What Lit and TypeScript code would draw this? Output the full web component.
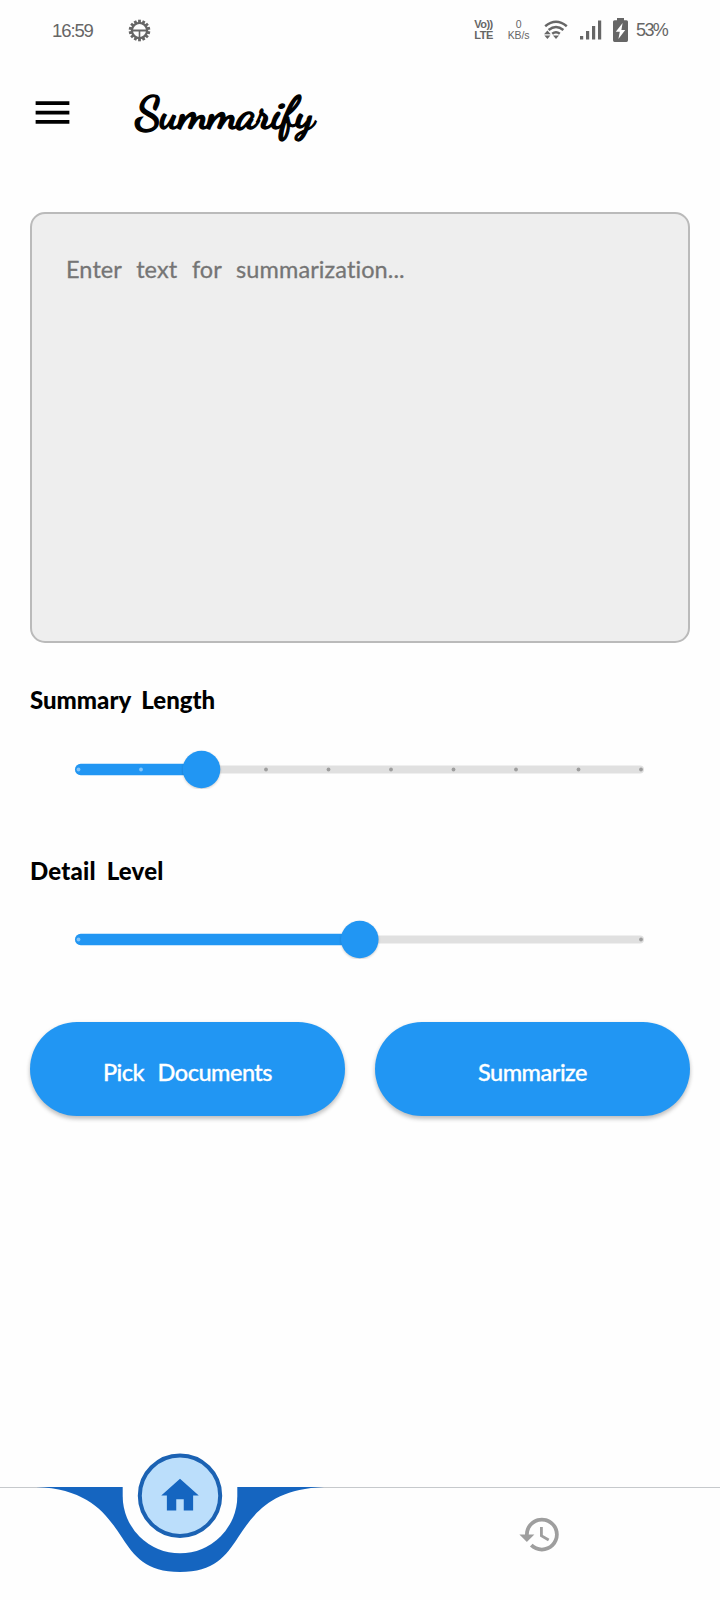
import { LitElement, html, css, svg } from "lit";
import { customElement, property } from "lit/decorators.js";

@customElement("step-slider")
class StepSlider extends LitElement {
  @property({ type: Number }) steps = 1;
  @property({ type: Number }) value = 0;
  static styles = css`
    :host { display: block; height: 40px; }
    svg { display: block; }
    .rest { fill: #e0e0e0; }
    .active, .thumb { fill: #2196f3; }
    .thumb { filter: drop-shadow(0 1px 1px rgba(0, 0, 0, 0.2)); }
    .tick { fill: #9e9e9e; }
    .tick.on { fill: #82c4f8; }
  `;
  render() {
    const x = 48.5 + this.value * 562.5;
    const thumb = this.value < 0.5 ? x - 2 : x;
    const ticks = Array.from({ length: this.steps + 1 }, (_, i) => i / this.steps);
    return html`<svg width="660" height="40" viewBox="0 0 660 40">
      <rect class="rest" x="45" y="16.5" width="569" height="8" rx="4" />
      <rect class="active" x="45" y="14.8" width=${thumb - 45} height="11.4" rx="5.7" />
      ${ticks.map((t) => svg`<circle class=${t < this.value ? "tick on" : "tick"} cx=${48.5 + t * 562.5} cy="20.5" r="1.9" />`)}
      <circle class="thumb" cx=${thumb} cy="20.5" r="18.8" />
    </svg>`;
  }
}

@customElement("app-root")
class AppRoot extends LitElement {
  static styles = css`
    :host {
      display: flex; flex-direction: column; width: 720px; height: 1600px;
      background: #fefefe; box-sizing: border-box; overflow: hidden;
      font-family: Lato, "Open Sans", sans-serif; color: #000;
    }
    * { box-sizing: border-box; }
    svg { display: block; flex: none; }
    .status {
      height: 60px; flex: none; display: flex; align-items: center; padding: 0 53px 0 52px;
      color: #666; fill: #666; font-family: "Liberation Sans", sans-serif;
    }
    .time { font-size: 18.5px; width: 76px; letter-spacing: -1.1px; padding-top: 1px; }
    .right { margin-left: auto; display: flex; align-items: center; }
    .mini { display: flex; flex-direction: column; align-items: center; font-size: 10.5px; line-height: 11px; }
    .volte { font-weight: 700; width: 19px; font-size: 11px; letter-spacing: -0.5px; margin-right: 14px; }
    .speed { width: 23px; margin-right: 14px; letter-spacing: -0.2px; }
    .wifi { margin-right: 12px; }
    .bars { margin-right: 11px; }
    .battery { margin-right: 8px; }
    .pct { font-size: 18px; letter-spacing: -1.6px; width: 31px; white-space: nowrap; padding-top: 1px; }
    header { height: 106px; flex: none; padding-left: 30px; display: flex; align-items: flex-start; }
    .menu { margin-top: 30px; }
    .title {
      margin: 26px 0 0 60px; font: 700 46px/56px "Dancing Script", cursive;
      white-space: nowrap; letter-spacing: -1.2px; -webkit-text-stroke: 1.3px #000;
    }
    main { padding: 46px 30px 0; flex: none; height: 1318px; }
    .box {
      height: 431px; border: 2px solid #bababa; border-radius: 15px; background: #eee;
      padding: 39px 34px; color: #757575; font-size: 23.5px; line-height: 32px;
      letter-spacing: 0.1px; word-spacing: 8.5px; -webkit-text-stroke: 0.3px #757575;
    }
    .label { font-size: 24px; line-height: 32px; font-weight: 900; white-space: nowrap; word-spacing: 5px; }
    .l1 { margin-top: 41px; }
    .l2 { margin-top: 66px; letter-spacing: 0.2px; }
    step-slider { margin-top: 32.5px; }
    .buttons { display: grid; grid-template-columns: 1fr 1fr; gap: 30px; margin-top: 63px; }
    .btn {
      height: 94px; border-radius: 47px; background: #2196f3; color: #fff; border: 0;
      box-shadow: 0 3px 4px rgba(0, 0, 0, 0.22), 0 1px 5px rgba(0, 0, 0, 0.06);
      font: 500 23.5px/32px Lato, sans-serif; word-spacing: 8px; padding: 5px 0 0;
      letter-spacing: -0.5px; -webkit-text-stroke: 0.3px #fff;
    }
    .nav { margin-top: -34px; height: 150px; flex: none; }
    .hair { fill: #c6c9cc; }
    .wave { fill: #1565c0; }
    .gap { fill: #fefefe; }
    .disc { fill: #bbdefb; stroke: #1b62b3; stroke-width: 4; }
    .hist { fill: #9e9e9e; }
  `;
  render() {
    const teeth = Array.from({ length: 14 }, (_, i) => (i * 360) / 14);
    return html`
      <div class="status">
        <span class="time">16:59</span>
        <svg width="23" height="23" viewBox="-11.5 -11.5 23 23">
          ${teeth.map((a) => svg`<rect x="-1.4" y="-10.8" width="2.8" height="4" transform="rotate(${a})" />`)}
          <circle r="7.6" fill="none" stroke="#666" stroke-width="2.2" />
          <path d="M-7-.9H7V.9H-7zM-.8 0H.8V7H-.8z" />
        </svg>
        <div class="right">
          <div class="mini volte"><span>Vo))</span><span>LTE</span></div>
          <div class="mini speed"><span>0</span><span>KB/s</span></div>
          <svg class="wifi" width="24" height="20" viewBox="0 0 24 20">
            <g fill="none" stroke="#666" stroke-width="2.5">
              <path d="M1.2 6.2Q12 -2.8 22.8 6.2M4.6 10Q12 4 19.4 10M8.2 13.8Q12 10.8 15.8 13.8" />
            </g>
            <path d="M9 15.4H15L12 19zM0 14.2L3.4 10.6 6.8 14.2zM.4 15.6H6.4L3.4 19z" />
          </svg>
          <svg class="bars" width="22" height="20" viewBox="0 0 22 20">
            <path d="M0 16H3.2V19.5H0zM6 11H9.2V19.5H6zM12 6H15.2V19.5H12zM18 .5H21.2V19.5H18z" />
          </svg>
          <svg class="battery" width="15" height="24" viewBox="0 0 15 24">
            <path d="M4 0H11V2.2H13.5Q15 2.2 15 3.7V22.3Q15 24 13.5 24H1.5Q0 24 0 22.3V3.7Q0 2.2 1.5 2.2H4z" />
            <path fill="#fff" d="M9.6 5L2.8 13.8H6.8L5.4 21 12.2 12H8.4z" />
          </svg>
          <span class="pct">53%</span>
        </div>
      </div>
      <header>
        <svg class="menu" width="45" height="45" viewBox="0 0 24 24"><path d="M3 18h18v-2H3v2zm0-5h18v-2H3v2zm0-7v2h18V6H3z" /></svg>
        <div class="title">Summarify</div>
      </header>
      <main>
        <div class="box">Enter text for summarization...</div>
        <div class="label l1">Summary Length</div>
        <step-slider .steps=${9} .value=${2 / 9}></step-slider>
        <div class="label l2">Detail Level</div>
        <step-slider .steps=${2} .value=${0.5}></step-slider>
        <div class="buttons">
          <button class="btn">Pick Documents</button>
          <button class="btn">Summarize</button>
        </div>
      </main>
      <svg class="nav" width="720" height="150" viewBox="0 1450 720 150">
        <rect class="hair" y="1487" width="720" height="1" />
        <path class="wave" d="M36 1487C90 1489 107 1515 122 1537.500C134 1556 146 1572 180 1572S226 1556 238 1537.500C253 1515 270 1489 324 1487Z" />
        <path class="gap" d="M122.700 1486V1496A57.300 57.300 0 0 0 237.300 1496V1486Z" />
        <circle class="disc" cx="180" cy="1495.700" r="40.200" />
        <path class="wave" transform="translate(157.500 1473) scale(1.875)" d="M10 20v-6h4v6h5v-8h3L12 3 2 12h3v8z" />
        <path class="hist" transform="translate(517.500 1512) scale(1.875)" d="M13 3c-4.970 0-9 4.030-9 9H1l3.890 3.890.070.140L9 12H6c0-3.870 3.130-7 7-7s7 3.130 7 7-3.130 7-7 7c-1.930 0-3.680-.790-4.940-2.060l-1.420 1.420C8.270 19.990 10.510 21 13 21c4.970 0 9-4.030 9-9s-4.030-9-9-9zm-1 5v5l4.280 2.540.720-1.210-3.500-2.080V8H12z" />
      </svg>
    `;
  }
}
